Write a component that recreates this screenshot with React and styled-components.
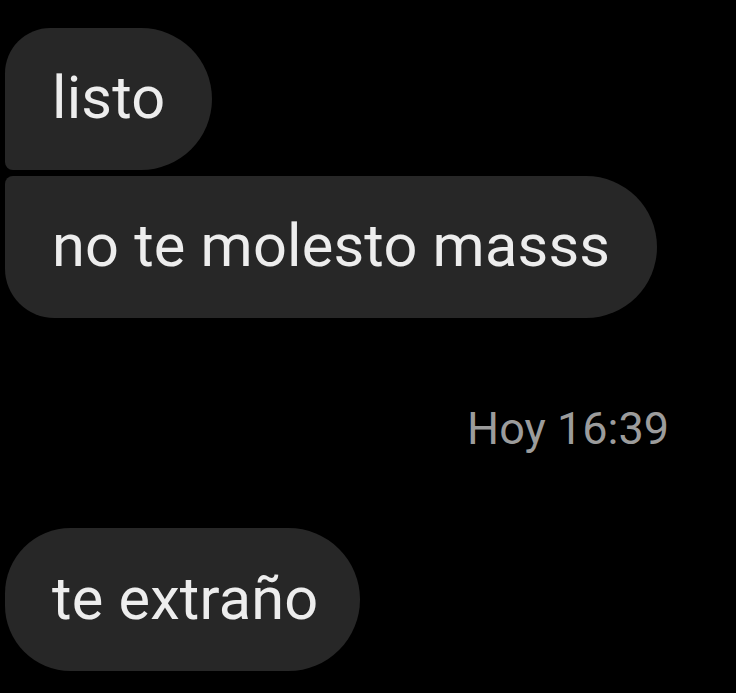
import styled, { createGlobalStyle } from "styled-components";

const GlobalStyle = createGlobalStyle`
  html, body {
    margin: 0;
    padding: 0;
    background: #000;
  }
  body {
    width: 736px;
    height: 693px;
    overflow: hidden;
    font-family: Roboto, "Liberation Sans", sans-serif;
  }
`;

const Screen = styled.div`
  width: 736px;
  height: 693px;
  background: #000;
  box-sizing: border-box;
  padding: 28px 0 0 5px;
  display: flex;
  flex-direction: column;
`;

const Group = styled.div`
  display: flex;
  flex-direction: column;
  align-items: flex-start;
  gap: 6px;
`;

const Bubble = styled.div`
  box-sizing: border-box;
  height: ${({ $pos }) => ($pos === "single" ? "143px" : "142px")};
  padding: 0 ${({ $pos }) => ($pos === "single" ? "42px" : "47px")} 2px 47px;
  display: flex;
  align-items: center;
  background: #272727;
  color: #ededed;
  font-size: 59.5px;
  letter-spacing: 0.2px;
  white-space: nowrap;
  border-radius: ${({ $pos }) =>
    $pos === "first"
      ? "46px 72px 72px 8px"
      : $pos === "last"
      ? "8px 72px 72px 50px"
      : "66px 72px 72px 66px"};
`;

const Stamp = styled.div`
  align-self: flex-end;
  margin: 84px 67px 0 0;
  color: #9c9c9c;
  font-size: 45px;
`;

const Spacer = styled.div`
  height: 73px;
`;

export default function App() {
  return (
    <>
      <GlobalStyle />
      <Screen>
        <Group>
          <Bubble $pos="first">listo</Bubble>
          <Bubble $pos="last">no te molesto masss</Bubble>
        </Group>
        <Stamp>Hoy 16:39</Stamp>
        <Spacer />
        <Group>
          <Bubble $pos="single">te extraño</Bubble>
        </Group>
      </Screen>
    </>
  );
}
